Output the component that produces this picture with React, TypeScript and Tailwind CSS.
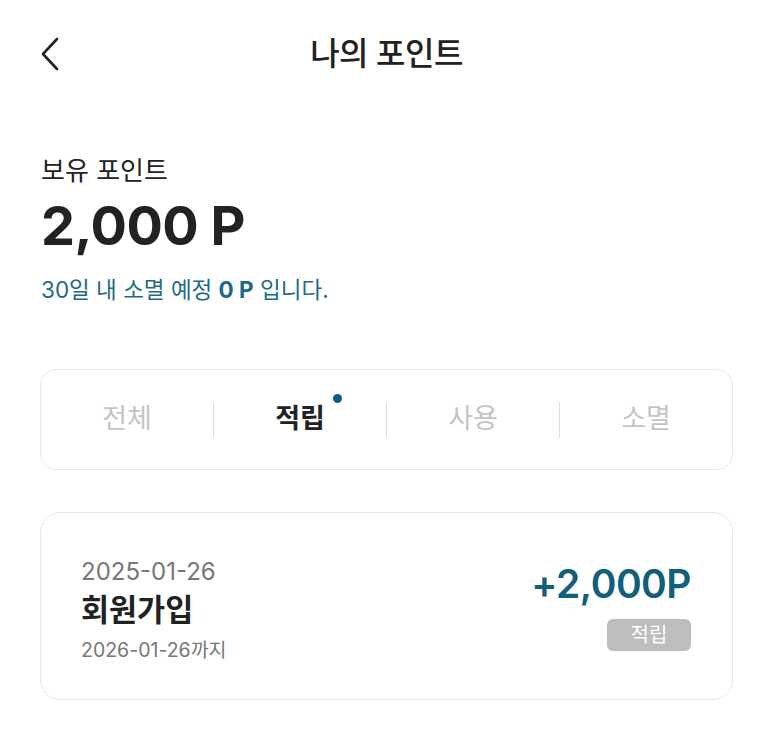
import React from 'react';

const tabs = ['전체', '적립', '사용', '소멸'];

function ChevronLeft() {
  return (
    <svg width="22" height="36" viewBox="0 0 22 36" fill="none" className="shrink-0">
      <path d="M17 3L3 18L17 33" stroke="#222" strokeWidth="2.6" strokeLinecap="round" strokeLinejoin="round" />
    </svg>
  );
}

export default function App() {
  const active = 1;

  return (
    <div
      className="min-h-[752px] w-full bg-white text-[#222]"
      style={{ fontFamily: 'Inter, "Noto Sans CJK KR", sans-serif' }}
    >
      {/* header */}
      <div className="grid h-[108px] grid-cols-[1fr_auto_1fr] items-center px-10">
        <button className="flex items-center justify-self-start">
          <ChevronLeft />
        </button>
        <h1 className="text-[32px] font-medium tracking-[-0.5px]">나의 포인트</h1>
        <div />
      </div>

      {/* balance */}
      <div className="flex flex-col px-[41px] pt-[46px]">
        <span className="text-[26px] leading-[34px] text-[#222]">보유 포인트</span>
        <span className="mt-[7px] text-[54px] font-bold leading-[62px] tracking-[-0.5px] text-[#222]">
          2,000 P
        </span>
        <span className="mt-[18px] text-[22.5px] leading-[30px] text-[#1b6b86]">
          30일 내 소멸 예정 <b className="font-bold">0 P</b> 입니다.
        </span>
      </div>

      {/* tabs */}
      <div className="mx-10 mt-[64px] flex h-[101px] items-center rounded-[16px] border border-[#e8e8e8]">
        {tabs.map((t, i) => (
          <React.Fragment key={t}>
            {i > 0 && <div className="h-[36px] w-px bg-[#dcdcdc]" />}
            <div className="flex flex-1 justify-center">
              <span
                className={
                  i === active
                    ? 'relative text-[27px] font-bold text-[#222]'
                    : 'relative text-[27px] text-[#c4c4c4]'
                }
              >
                {t}
                {i === active && (
                  <span className="absolute -right-[17px] top-[-5px] h-[9px] w-[9px] rounded-full bg-[#0d5f7c]" />
                )}
              </span>
            </div>
          </React.Fragment>
        ))}
      </div>

      {/* history */}
      <div className="mx-10 mt-[42px] flex h-[188px] items-center justify-between rounded-[20px] border border-[#e8e8e8] pl-[40px] pr-[41px]">
        <div className="flex flex-col pt-[8px]">
          <span className="text-[24px] leading-[30px] text-[#777]">2025-01-26</span>
          <span className="mt-[4px] text-[30.5px] font-semibold leading-[38px] text-[#222]">회원가입</span>
          <span className="mt-[8px] text-[19.5px] leading-[26px] text-[#777]">2026-01-26까지</span>
        </div>
        <div className="flex flex-col items-end">
          <span className="text-[39px] font-semibold leading-[44px] tracking-[-0.5px] text-[#125f79]">+2,000P</span>
          <span className="mt-[13px] flex h-[32px] w-[84px] items-center justify-center rounded-[6px] bg-[#bdbdbd] text-[20px] text-white">
            적립
          </span>
        </div>
      </div>
    </div>
  );
}
